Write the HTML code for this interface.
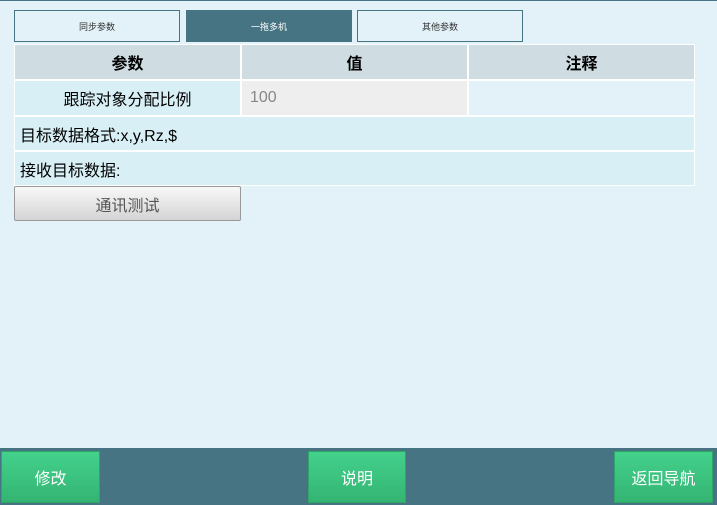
<!DOCTYPE html>
<html><head><meta charset="utf-8"><style>
*{margin:0;padding:0;box-sizing:border-box}
body{width:717px;height:505px;background:#e2f2f8;position:relative;overflow:hidden;font-family:"Liberation Sans","Noto Sans CJK SC",sans-serif}
.a{position:absolute}
.tab{position:absolute;top:10px;height:32px;border:1px solid #467482;font-size:9px;color:#333;display:flex;align-items:center;justify-content:center}
.c{position:absolute;display:flex;align-items:center;justify-content:center}
.l{position:absolute;display:flex;align-items:center;padding-left:5px;font-size:16px;background:#d8eff6}
.h{background:#cfdde2;font-weight:bold;font-size:16px;color:#000}
.btn{position:absolute;top:451px;height:52px;background:linear-gradient(#43d18c,#34b473);border:1px solid #2fa566;color:#fff;font-size:16px;display:flex;align-items:center;justify-content:center}
</style></head><body>
<div class="a" style="left:0;top:0;width:717px;height:1px;background:#467482"></div>
<div class="tab" style="left:14px;width:166px">同步参数</div>
<div class="tab" style="left:186px;width:166px;background:#467482;color:#fff">一拖多机</div>
<div class="tab" style="left:357px;width:166px">其他参数</div>
<div class="a" style="left:14px;top:44px;width:681px;height:142px;background:#fff"></div>
<div class="c h" style="left:15px;top:45px;width:225px;height:34px">参数</div>
<div class="c h" style="left:242px;top:45px;width:225px;height:34px">值</div>
<div class="c h" style="left:469px;top:45px;width:225px;height:34px">注释</div>
<div class="c" style="left:15px;top:81px;width:225px;height:34px;background:#d8eff6;font-size:16px">跟踪对象分配比例</div>
<div class="l" style="left:242px;top:81px;width:225px;height:34px;background:#eeeeee;color:#888;padding-left:8px">100</div>
<div class="a" style="left:469px;top:81px;width:225px;height:34px;background:#e2f2f8"></div>
<div class="l" style="left:15px;top:117px;width:679px;height:33px">目标数据格式:x,y,Rz,$</div>
<div class="l" style="left:15px;top:152px;width:679px;height:33px">接收目标数据:</div>
<div class="c" style="left:14px;top:186px;width:227px;height:35px;background:linear-gradient(#f8f8f8,#d4d4d4);border:1px solid #999;border-radius:2px;font-size:16px;color:#555">通讯测试</div>
<div class="a" style="left:0;top:448px;width:717px;height:57px;background:#467482"></div>
<div class="btn" style="left:1px;width:99px">修改</div>
<div class="btn" style="left:308px;width:98px">说明</div>
<div class="btn" style="left:614px;width:99px">返回导航</div>
</body></html>
